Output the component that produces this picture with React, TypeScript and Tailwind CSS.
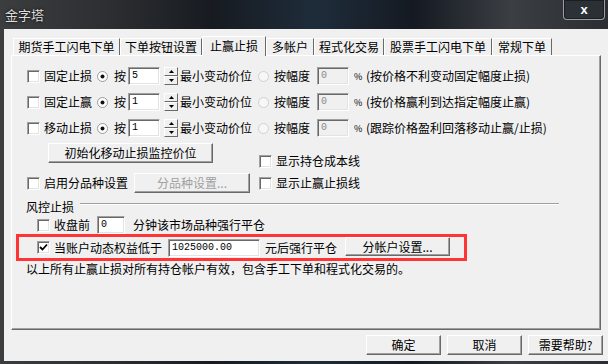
import React from "react";

const Check = ({ checked = false }: { checked?: boolean }) => (
  <span className="relative shrink-0 w-[13px] h-[13px] bg-white border border-t-[#a0a0a0] border-l-[#a0a0a0] border-r-white border-b-white shadow-[inset_1px_1px_0_#696969,inset_-1px_-1px_0_#e3e3e3] flex items-center justify-center">
    {checked && (
      <svg width="9" height="9" viewBox="0 0 9 9">
        <path d="M1 4 L3.5 6.5 L8 1.5" stroke="#000" strokeWidth="1.8" fill="none" />
      </svg>
    )}
  </span>
);

const Radio = ({ on = false }: { on?: boolean }) => (
  <svg width="11" height="11" viewBox="0 0 11 11" className="shrink-0">
    <circle cx="5.5" cy="5.5" r="5" fill={on ? "#fff" : "#f7f7f7"} stroke={on ? "#9a9a9a" : "#cfcfcf"} strokeWidth="1" />
    {on && <circle cx="5.5" cy="5.5" r="2" fill="#111" />}
  </svg>
);

const Input = ({
  value,
  w,
  disabled = false,
}: {
  value: string;
  w: string;
  disabled?: boolean;
}) => (
  <span
    className={`shrink-0 h-[18px] ${w} ${disabled ? "bg-[#f0f0f0] text-[#8a8a8a]" : "bg-white text-black"} border border-t-[#a0a0a0] border-l-[#a0a0a0] border-r-white border-b-white shadow-[inset_1px_1px_0_#696969,inset_-1px_-1px_0_#e3e3e3] flex items-center pl-[3px] font-['Liberation_Mono',monospace] text-[10px] leading-none`}
  >
    {value}
  </span>
);

const Spin = () => (
  <span className="shrink-0 w-[14px] h-[18px] flex flex-col">
    <span className="h-[9px] bg-[#f0f0f0] border border-t-white border-l-white border-r-[#696969] border-b-[#696969] flex items-center justify-center">
      <svg width="5" height="3" viewBox="0 0 5 3">
        <path d="M0 3 L2.5 0 L5 3 Z" fill="#000" />
      </svg>
    </span>
    <span className="h-[9px] bg-[#f0f0f0] border border-t-white border-l-white border-r-[#696969] border-b-[#696969] flex items-center justify-center">
      <svg width="5" height="3" viewBox="0 0 5 3">
        <path d="M0 0 L2.5 3 L5 0 Z" fill="#000" />
      </svg>
    </span>
  </span>
);

const Btn = ({
  children,
  w,
  h = "h-[20px]",
  disabled = false,
  extra = "",
}: {
  children: React.ReactNode;
  w: string;
  h?: string;
  disabled?: boolean;
  extra?: string;
}) => (
  <span
    className={`shrink-0 ${w} ${h} ${extra} bg-[#f0f0f0] border border-t-white border-l-white border-r-[#696969] border-b-[#696969] shadow-[inset_-1px_-1px_0_#a0a0a0] flex items-center justify-center text-[12px] leading-none ${disabled ? "text-[#a0a0a0]" : "text-black"}`}
  >
    {children}
  </span>
);

const T = ({ children, w = "", extra = "" }: { children: React.ReactNode; w?: string; extra?: string }) => (
  <span className={`shrink-0 whitespace-nowrap text-[12px] leading-[14px] ${w} ${extra}`}>{children}</span>
);

const tabs: { label: string; w: string; active?: boolean }[] = [
  { label: "期货手工闪电下单", w: "w-[107px]" },
  { label: "下单按钮设置", w: "w-[82px]" },
  { label: "止赢止损", w: "w-[64px]", active: true },
  { label: "多帐户", w: "w-[48px]" },
  { label: "程式化交易", w: "w-[70px]" },
  { label: "股票手工闪电下单", w: "w-[108px]" },
  { label: "常规下单", w: "w-[60px]" },
];

const StopRow = ({ label, val, note }: { label: string; val: string; note: string }) => (
  <div className="h-[26px] flex items-center pl-[15px]">
    <Check />
    <T w="w-[48px]" extra="ml-[4px]">{label}</T>
    <span className="ml-[5px]"><Radio on /></span>
    <T w="w-[12px]" extra="ml-[6px]">按</T>
    <span className="ml-[2px]"><Input value={val} w="w-[32px]" /></span>
    <span className="ml-[4px]"><Spin /></span>
    <T w="w-[72px]" extra="ml-[2px]">最小变动价位</T>
    <span className="ml-[6px]"><Radio /></span>
    <T w="w-[36px]" extra="ml-[5px]">按幅度</T>
    <span className="ml-[7px]"><Input value="0" w="w-[32px]" disabled /></span>
    <span className="ml-[5px] text-[9px] leading-none w-[7px]">%</span>
    <T extra="ml-[5px]">{note}</T>
  </div>
);

export default function App() {
  return (
    <div className="w-[608px] h-[364px] overflow-hidden bg-[linear-gradient(90deg,#3c3d3f_0%,#2c2e31_18%,#171b21_35%,#1e2c3a_52%,#151a22_68%,#3b3e43_84%,#2a2e33_100%)] font-['Noto_Sans_CJK_SC',sans-serif] text-black">
      {/* title bar */}
      <div className="h-[29px] flex items-start justify-between">
        <span className="ml-[5px] mt-[7px] text-[13px] leading-[15px] text-[#dcdcdc] [text-shadow:0_0_3px_#000]">金字塔</span>
        <span className="mr-[3px] w-[42px] h-[20px] rounded-b-[4px] border border-t-0 border-[#9a9ea4] bg-[#2b3036]/70 shadow-[inset_0_0_0_1px_#1a1d21] flex items-center justify-center text-white text-[13px] font-bold leading-none font-['Liberation_Sans',sans-serif]">
          x
        </span>
      </div>
      {/* body */}
      <div className="ml-[4px] h-[332px] bg-[#f0f0f0] flex flex-col">
        {/* tabs */}
        <div className="mt-[7px] h-[19px] flex items-end pl-[9px]">
          {tabs.map((t) => (
            <span
              key={t.label}
              className={`${t.w} shrink-0 flex items-center justify-center text-[12px] leading-none whitespace-nowrap border-t border-l border-r border-t-white border-l-white border-r-[#696969] ${t.active ? "h-[20px] -mb-px relative z-10 bg-[#f0f0f0] pb-[2px]" : "h-[17px]"}`}
            >
              {t.label}
            </span>
          ))}
        </div>
        {/* panel */}
        <div className="ml-[7px] w-[590px] h-[275px] border border-t-white border-l-white border-r-[#696969] border-b-[#696969] shadow-[inset_-1px_-1px_0_#a0a0a0] flex flex-col">
          <div className="mt-[7px]">
            <StopRow label="固定止损" val="5" note="(按价格不利变动固定幅度止损)" />
            <StopRow label="固定止赢" val="1" note="(按价格赢利到达指定幅度止赢)" />
            <StopRow label="移动止损" val="1" note="(跟踪价格盈利回落移动止赢/止损)" />
          </div>
          {/* init button row */}
          <div className="h-[27px] flex items-start pl-[36px]">
            <Btn w="w-[165px]" extra="mt-[2px]">初始化移动止损监控价位</Btn>
            <span className="ml-[46px] mt-[13px] flex items-center">
              <Check />
              <T extra="ml-[4px]">显示持仓成本线</T>
            </span>
          </div>
          {/* variety row */}
          <div className="mt-[2px] h-[26px] flex items-center pl-[15px]">
            <Check />
            <T w="w-[84px]" extra="ml-[4px]">启用分品种设置</T>
            <Btn w="w-[116px]" disabled extra="ml-[6px]">分品种设置...</Btn>
            <span className="ml-[9px]"><Check /></span>
            <T extra="ml-[4px]">显示止赢止损线</T>
          </div>
          {/* group label */}
          <div className="mt-[3px] h-[16px] flex items-start pl-[14px]">
            <T w="w-[48px]" extra="mt-[1px]">风控止损</T>
            <span className="ml-[6px] mt-[4px] w-[479px] h-[2px] border-t border-t-[#a0a0a0] border-b border-b-white"></span>
          </div>
          {/* close before */}
          <div className="mt-[1px] h-[18px] flex items-center pl-[25px]">
            <Check />
            <T w="w-[36px]" extra="ml-[4px]">收盘前</T>
            <span className="ml-[7px]"><Input value="0" w="w-[28px]" /></span>
            <T extra="ml-[8px]">分钟该市场品种强行平仓</T>
          </div>
          {/* highlighted row */}
          <div className="ml-[4px] w-[451px] h-[27px] border-[3px] border-[#ff3535] flex items-center pl-[18px]">
            <Check checked />
            <T w="w-[108px]" extra="ml-[4px]">当账户动态权益低于</T>
            <span className="ml-[6px]"><Input value="1025000.00" w="w-[92px]" /></span>
            <T w="w-[72px]" extra="ml-[5px]">元后强行平仓</T>
            <Btn w="w-[105px]" h="h-[19px]" extra="ml-[8px] -mt-[2px]">分帐户设置...</Btn>
          </div>
          <div className="h-[16px] flex items-center pl-[14px]">
            <T>以上所有止赢止损对所有持仓帐户有效，包含手工下单和程式化交易的。</T>
          </div>
        </div>
        {/* bottom buttons */}
        <div className="mt-[5px] flex justify-end pr-[5px] gap-[6px]">
          <Btn w="w-[75px]">确定</Btn>
          <Btn w="w-[75px]">取消</Btn>
          <Btn w="w-[75px]">需要帮助?</Btn>
        </div>
      </div>
    </div>
  );
}
